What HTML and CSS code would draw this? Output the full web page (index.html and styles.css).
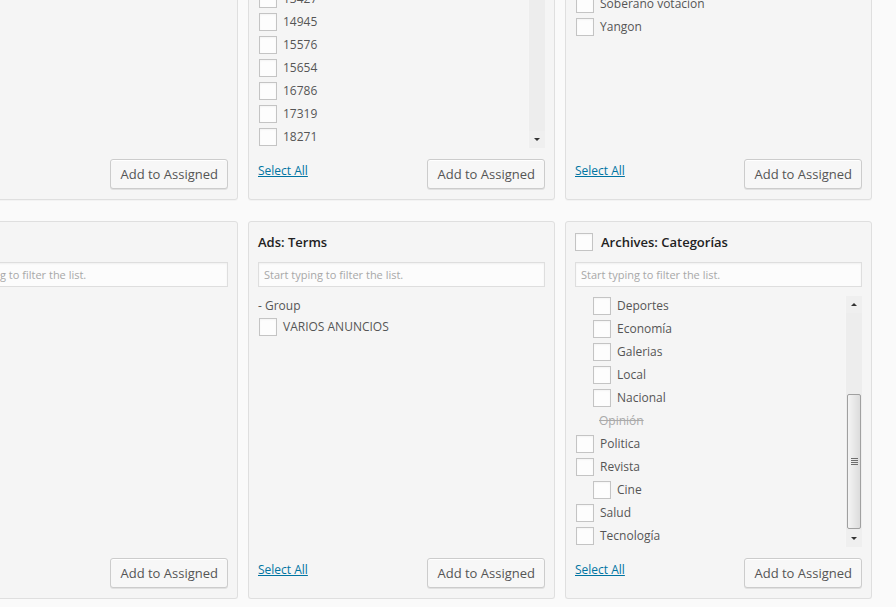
FILE: index.html
```html
<!DOCTYPE html>
<html lang="es">
    <head>
        <meta charset="UTF-8">
        <title>Sidebar conditions</title>
        <link rel="stylesheet" href="styles.css">
    </head>
    <body>
        <div class="widgets">

            <!-- row 1 -->
            <div class="box">
                <h3 class="box-title">Autor</h3>
                <input class="filter" type="text" placeholder="Start typing to filter the list.">
                <div class="list">
                    <ul class="items">
                        <li><input class="check" type="checkbox">admin</li>
                        <li><input class="check" type="checkbox">editor</li>
                    </ul>
                </div>
                <div class="box-foot">
                    <a class="select-all" href="#">Select All</a>
                    <button class="btn">Add to Assigned</button>
                </div>
            </div>

            <div class="box">
                <h3 class="box-title">Posts</h3>
                <input class="filter" type="text" placeholder="Start typing to filter the list.">
                <div class="list">
                    <ul class="items bottom">
                        <li><input class="check" type="checkbox">12012</li>
                        <li><input class="check" type="checkbox">12388</li>
                        <li><input class="check" type="checkbox">12903</li>
                        <li><input class="check" type="checkbox">13110</li>
                        <li><input class="check" type="checkbox">13427</li>
                        <li><input class="check" type="checkbox">14945</li>
                        <li><input class="check" type="checkbox">15576</li>
                        <li><input class="check" type="checkbox">15654</li>
                        <li><input class="check" type="checkbox">16786</li>
                        <li><input class="check" type="checkbox">17319</li>
                        <li><input class="check" type="checkbox">18271</li>
                    </ul>
                    <div class="scrollbar">
                        <span class="sb-arrow up"></span>
                        <span class="sb-track top"><span class="sb-thumb short"><span class="grip"></span></span></span>
                        <span class="sb-arrow down"></span>
                    </div>
                </div>
                <div class="box-foot">
                    <a class="select-all" href="#">Select All</a>
                    <button class="btn">Add to Assigned</button>
                </div>
            </div>

            <div class="box">
                <h3 class="box-title">Tags</h3>
                <input class="filter" type="text" placeholder="Start typing to filter the list.">
                <div class="list">
                    <ul class="items spaced">
                        <li><input class="check" type="checkbox">Elecciones</li>
                        <li><input class="check" type="checkbox">Futbol</li>
                        <li><input class="check" type="checkbox">Gobierno</li>
                        <li><input class="check" type="checkbox">Myanmar</li>
                        <li><input class="check" type="checkbox">Soberano votacion</li>
                        <li><input class="check" type="checkbox">Yangon</li>
                    </ul>
                </div>
                <div class="box-foot">
                    <a class="select-all" href="#">Select All</a>
                    <button class="btn">Add to Assigned</button>
                </div>
            </div>

            <!-- row 2 -->
            <div class="box">
                <h3 class="box-title">Autor</h3>
                <input class="filter" type="text" placeholder="Start typing to filter the list.">
                <div class="list">
                    <ul class="items"></ul>
                </div>
                <div class="box-foot">
                    <a class="select-all" href="#">Select All</a>
                    <button class="btn">Add to Assigned</button>
                </div>
            </div>

            <div class="box">
                <h3 class="box-title">Ads: Terms</h3>
                <input class="filter" type="text" placeholder="Start typing to filter the list.">
                <div class="list">
                    <ul class="items">
                        <li class="group-label">- Group</li>
                        <li><input class="check" type="checkbox">VARIOS ANUNCIOS</li>
                    </ul>
                </div>
                <div class="box-foot">
                    <a class="select-all" href="#">Select All</a>
                    <button class="btn">Add to Assigned</button>
                </div>
            </div>

            <div class="box">
                <h3 class="box-title"><input class="check head" type="checkbox">Archives: Categorías</h3>
                <input class="filter" type="text" placeholder="Start typing to filter the list.">
                <div class="list">
                    <ul class="items bottom">
                        <li><input class="check" type="checkbox">Cultura</li>
                        <li class="child"><input class="check" type="checkbox">Deportes</li>
                        <li class="child"><input class="check" type="checkbox">Economía</li>
                        <li class="child"><input class="check" type="checkbox">Galerias</li>
                        <li class="child"><input class="check" type="checkbox">Local</li>
                        <li class="child"><input class="check" type="checkbox">Nacional</li>
                        <li class="off">Opinión</li>
                        <li><input class="check" type="checkbox">Politica</li>
                        <li><input class="check" type="checkbox">Revista</li>
                        <li class="child"><input class="check" type="checkbox">Cine</li>
                        <li><input class="check" type="checkbox">Salud</li>
                        <li><input class="check" type="checkbox">Tecnología</li>
                    </ul>
                    <div class="scrollbar">
                        <span class="sb-arrow up"></span>
                        <span class="sb-track"><span class="sb-thumb"><span class="grip"></span></span></span>
                        <span class="sb-arrow down"></span>
                    </div>
                </div>
                <div class="box-foot">
                    <a class="select-all" href="#">Select All</a>
                    <button class="btn">Add to Assigned</button>
                </div>
            </div>

        </div>
    </body>
</html>
```

FILE: styles.css
```css
body {
    margin: 0;
    overflow: hidden;
    background: #fafafa;
    color: #555;
    font-family: "Open Sans", "Liberation Sans", sans-serif;
    font-size: 12px;
}

.widgets {
    display: grid;
    grid-template-columns: repeat(3, 307px);
    grid-auto-rows: 378px;
    column-gap: 10px;
    row-gap: 21px;
    margin: -178px 0 0 -69px;
}

.box {
    box-sizing: border-box;
    display: flex;
    flex-direction: column;
    padding: 10px 9px;
    background: #f5f5f5;
    border: 1px solid #dfdfdf;
    border-radius: 3px;
    box-shadow: 0 1px 1px rgba(0,0,0, 0.03);
}

.box-title {
    display: flex;
    align-items: center;
    height: 20px;
    margin: 0;
    color: #222;
    font-size: 13px;
    font-weight: 600;
    line-height: 20px;
}

.filter {
    box-sizing: border-box;
    width: 100%;
    height: 25px;
    margin: 10px 0 0;
    padding: 0 5px;
    background: #fcfcfc;
    border: 1px solid #dedede;
    box-shadow: inset 0 1px 2px rgba(0,0,0, 0.05);
    font-family: inherit;
    font-size: 11px;
    outline: 0;
}

.filter::placeholder {
    color: #a8a8a8;
}

.list {
    display: flex;
    height: 251px;
    margin-top: 9px;
}

.items {
    flex: 1;
    display: flex;
    flex-direction: column;
    margin: 0;
    padding: 0;
    list-style: none;
    overflow: hidden;
}

.items.bottom {
    justify-content: flex-end;
}

.items.spaced {
    padding-top: 3px;
}

.items li {
    display: flex;
    align-items: center;
    flex-shrink: 0;
    height: 23px;
    white-space: nowrap;
}

.items li.group-label {
    height: 19px;
}

.items li.child {
    padding-left: 17px;
}

.items li.off {
    padding-left: 24px;
    color: #aaa;
    text-decoration: line-through;
}

.check {
    appearance: none;
    -webkit-appearance: none;
    box-sizing: border-box;
    flex-shrink: 0;
    width: 18px;
    height: 18px;
    margin: 0 6px 0 1px;
    background: #fdfdfd;
    border: 1px solid #c4c4c4;
    box-shadow: inset 0 1px 2px rgba(0,0,0, 0.04);
}

.check.head {
    margin: 0 8px 0 0;
}

/* fake scrollbar */
.scrollbar {
    display: flex;
    flex-direction: column;
    width: 16px;
    background: #ededed;
    border-left: 1px solid #f6f6f6;
}

.sb-arrow {
    display: flex;
    align-items: center;
    justify-content: center;
    height: 17px;
    background: #efefef;
}

.sb-arrow::before {
    content: "";
    border-left: 3px solid transparent;
    border-right: 3px solid transparent;
}

.sb-arrow.up::before {
    border-bottom: 3px solid #333;
}

.sb-arrow.down::before {
    border-top: 3px solid #333;
}

.sb-track {
    flex: 1;
    display: flex;
    flex-direction: column;
    justify-content: flex-end;
    padding: 0 1px 1px 1px;
}

.sb-track.top {
    justify-content: flex-start;
    padding: 1px 1px 0 1px;
}

.sb-thumb {
    box-sizing: border-box;
    display: flex;
    align-items: center;
    justify-content: center;
    height: 135px;
    background: linear-gradient(to right, #f4f4f4, #dcdcdc);
    border: 1px solid #a0a0a0;
    border-radius: 2px;
}

.sb-thumb.short {
    height: 60px;
}

.grip {
    width: 7px;
    height: 7px;
    background: repeating-linear-gradient(to bottom, #6d6d6d 0 1px, transparent 1px 2px);
}

.box-foot {
    display: flex;
    justify-content: space-between;
    align-items: flex-start;
    margin-top: auto;
}

.select-all {
    padding-top: 4px;
    color: #0074a2;
    font-size: 12px;
    line-height: 16px;
    text-decoration: underline;
}

.btn {
    height: 30px;
    padding: 0 9px;
    background: #f7f7f7;
    border: 1px solid #cccccc;
    border-radius: 3px;
    box-shadow: inset 0 1px 0 #fff, 0 1px 0 rgba(0,0,0, 0.08);
    color: #555;
    font-family: inherit;
    font-size: 13px;
    cursor: pointer;
}
```
